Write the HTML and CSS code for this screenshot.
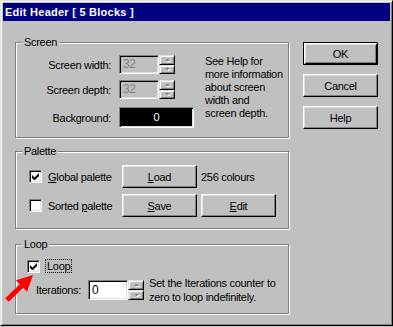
FILE: index.html
```html
<!DOCTYPE html>
<html lang="en">

<head>
    <meta charset="UTF-8">
    <meta name="viewport" content="width=device-width, initial-scale=1.0">
    <title>Edit Header</title>
    <link rel="stylesheet" href="styles.css">
</head>

<body>

    <div class="dialog">
        <div class="dialog__title">Edit Header [ 5 Blocks ]</div>

        <div class="dialog__body">
            <div class="dialog__groups">

                <!-- screen -->
                <div class="group">
                    <div class="group__title">Screen</div>
                    <div class="screen">
                        <div class="screen__fields">
                            <span class="field-label">Screen width:</span>
                            <div class="spin">
                                <div class="textbox textbox--disabled">32</div>
                                <div class="spin__buttons">
                                    <span class="spin__btn"><i class="tri tri--up"></i></span>
                                    <span class="spin__btn"><i class="tri tri--down"></i></span>
                                </div>
                            </div>

                            <span class="field-label">Screen depth:</span>
                            <div class="spin">
                                <div class="textbox textbox--disabled">32</div>
                                <div class="spin__buttons">
                                    <span class="spin__btn"><i class="tri tri--up"></i></span>
                                    <span class="spin__btn"><i class="tri tri--down"></i></span>
                                </div>
                            </div>

                            <span class="field-label field-label--bg">Background:</span>
                            <div class="colorbox">0</div>
                        </div>
                        <p class="screen__note">See Help for<br>more information<br>about screen<br>width and<br>screen depth.</p>
                    </div>
                </div>

                <!-- palette -->
                <div class="group group--palette">
                    <div class="group__title">Palette</div>
                    <div class="palette">
                        <label class="checkrow">
                            <span class="check"><svg viewBox="0 0 7 7" width="7" height="7"><polygon points="0,2 2.5,4.5 7,0 7,3 2.5,7.5 0,5" /></svg></span>
                            <span><u>G</u>lobal palette</span>
                        </label>
                        <button class="btn"><u>L</u>oad</button>
                        <span class="palette__info">256 colours</span>

                        <label class="checkrow">
                            <span class="check"></span>
                            <span>Sorted <u>p</u>alette</span>
                        </label>
                        <button class="btn"><u>S</u>ave</button>
                        <button class="btn"><u>E</u>dit</button>
                    </div>
                </div>

                <!-- loop -->
                <div class="group group--loop">
                    <div class="group__title">Loop</div>
                    <div class="loop">
                        <label class="checkrow">
                            <span class="check"><svg viewBox="0 0 7 7" width="7" height="7"><polygon points="0,2 2.5,4.5 7,0 7,3 2.5,7.5 0,5" /></svg></span>
                            <span class="loop__focus">Loop</span>
                        </label>
                        <div class="loop__row">
                            <span>Iterations:</span>
                            <div class="spin spin--iter">
                                <div class="textbox">0</div>
                                <div class="spin__buttons">
                                    <span class="spin__btn"><i class="tri tri--up"></i></span>
                                    <span class="spin__btn"><i class="tri tri--down"></i></span>
                                </div>
                            </div>
                            <p class="loop__note">Set the Iterations counter to<br>zero to loop indefinitely.</p>
                        </div>
                    </div>
                </div>
            </div>

            <div class="dialog__buttons">
                <button class="btn btn--default">OK</button>
                <button class="btn">Cancel</button>
                <button class="btn">Help</button>
            </div>
        </div>

        <!-- red pointer over the Loop checkbox -->
        <svg class="pointer" width="40" height="36" viewBox="0 0 40 36">
            <polygon points="32,6 15,11.2 18.8,15.2 4.3,29.2 7.7,32.8 22.2,18.8 26,22.8" fill="#f00" />
        </svg>
    </div>

</body>

</html>
```

FILE: styles.css
```css
body {
    margin: 0;
    background: #c0c0c0;
    font-family: "Liberation Sans", Arial, sans-serif;
    font-size: 11px;
    letter-spacing: -0.3px;
    color: #000;
}

p {
    margin: 0;
}

/* ========== DIALOG =========== */
.dialog {
    position: relative;
    width: 393px;
    height: 326px;
    box-sizing: border-box;
    padding: 2px;
    border: 1px solid;
    border-color: #dfdfdf #000 #000 #dfdfdf;
    box-shadow: inset 1px 1px #fff, inset -1px -1px #808080;
    background: #c0c0c0;
}

.dialog__title {
    height: 18px;
    line-height: 18px;
    padding-left: 2px;
    background: #000080;
    color: #fff;
    font-weight: bold;
    letter-spacing: 0.25px;
}

.dialog__body {
    display: flex;
    gap: 14px;
    padding: 21px 0 0 12px;
}

.dialog__groups {
    width: 274px;
}

.dialog__buttons {
    display: flex;
    flex-direction: column;
    gap: 9px;
}

/* group box */
.group {
    border: 1px solid #808080;
    box-shadow: 1px 1px #fff, inset 1px 1px #fff;
}

.group--palette {
    margin-top: 13px;
}

.group--loop {
    margin-top: 15px;
}

.group__title {
    width: fit-content;
    margin: -7px 0 0 6px;
    padding: 0 2px;
    line-height: 13px;
    background: #c0c0c0;
}

/* buttons */
.btn {
    width: 75px;
    height: 23px;
    padding: 0;
    font: inherit;
    letter-spacing: inherit;
    color: #000;
    background: #c0c0c0;
    border: 1px solid;
    border-color: #fff #000 #000 #fff;
    box-shadow: inset -1px -1px #808080, inset 1px 1px #dfdfdf;
}

.btn--default {
    border-color: #000;
    box-shadow: inset 1px 1px #fff, inset -1px -1px #000, inset 2px 2px #dfdfdf, inset -2px -2px #808080;
}

/* sunken fields */
.textbox,
.colorbox,
.check {
    box-sizing: border-box;
    border: 1px solid;
    border-color: #808080 #fff #fff #808080;
    box-shadow: inset 1px 1px #000, inset -1px -1px #dfdfdf;
}

.textbox {
    width: 40px;
    height: 19px;
    padding: 0 3px;
    line-height: 17px;
    font-size: 12px;
    background: #fff;
}

.textbox--disabled {
    background: #c0c0c0;
    color: #808080;
}

.colorbox {
    width: 75px;
    height: 21px;
    line-height: 19px;
    text-align: center;
    background: #000;
    color: #fff;
}

.spin {
    display: flex;
}

.spin__buttons {
    display: flex;
    flex-direction: column;
    width: 16px;
}

.spin__btn {
    flex: 1;
    display: flex;
    align-items: center;
    justify-content: center;
    box-sizing: border-box;
    border: 1px solid;
    border-color: #dfdfdf #000 #000 #dfdfdf;
    box-shadow: inset 1px 1px #fff, inset -1px -1px #808080;
}

.tri {
    width: 1px;
    height: 0;
    border-left: 2px solid transparent;
    border-right: 2px solid transparent;
    filter: drop-shadow(1px 1px 0 #fff);
}

.tri--up {
    border-bottom: 2px solid #808080;
}

.tri--down {
    border-top: 2px solid #808080;
}

/* screen */
.screen {
    display: flex;
    margin-top: 6px;
    padding-bottom: 9px;
}

.screen__fields {
    display: grid;
    grid-template-columns: 95px auto;
    column-gap: 8px;
    row-gap: 6px;
    align-items: center;
}

.field-label {
    text-align: right;
}

.field-label--bg,
.colorbox {
    margin-top: 2px;
}

.screen__note {
    margin-left: 11px;
    line-height: 13px;
}

/* palette */
.palette {
    display: grid;
    grid-template-columns: 89px 75px 75px;
    column-gap: 4px;
    row-gap: 6px;
    align-items: center;
    margin: 7px 0 0 13px;
    padding-bottom: 11px;
}

.checkrow {
    display: flex;
    align-items: center;
    gap: 6px;
}

.check {
    width: 13px;
    height: 13px;
    display: flex;
    align-items: center;
    justify-content: center;
    background: #fff;
}

.check svg {
    display: block;
}

/* loop */
.loop {
    margin-top: 8px;
    padding: 0 0 9px 11px;
}

.loop__focus {
    padding: 0 1px;
    line-height: 12px;
    border: 1px dotted #000;
    margin-left: -1px;
}

.loop__row {
    display: flex;
    align-items: center;
    margin: 3px 0 0 9px;
}

.spin--iter {
    margin-left: 7px;
}

.spin--iter .textbox {
    height: 20px;
    line-height: 18px;
}

.loop__note {
    margin-left: 5px;
    line-height: 14px;
}

.pointer {
    position: absolute;
    left: 0;
    top: 268px;
}
```
